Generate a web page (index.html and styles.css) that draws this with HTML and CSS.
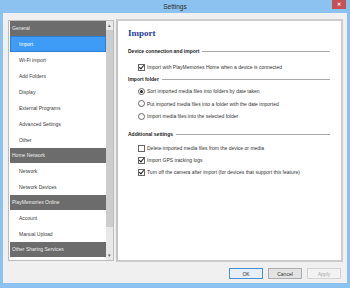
FILE: index.html
```html
<!DOCTYPE html>
<html>
<head>
  <title>Settings</title>
  <meta name="viewport" content="width=device-width, initial-scale=1.0">
  <link rel="stylesheet" href="styles.css">
</head>
<body>

  <div class="window">
    <div class="titlebar">
      <span></span>
      <span class="title">Settings</span>
      <span class="close">&#x2715;</span>
    </div>

    <div class="content">
      <div class="main">

        <!-- Left navigation -->
        <div class="sidebar">
          <ul class="nav">
            <li class="group">General</li>
            <li class="item selected">Import</li>
            <li class="item">Wi-Fi import</li>
            <li class="item">Add Folders</li>
            <li class="item">Display</li>
            <li class="item">External Programs</li>
            <li class="item">Advanced Settings</li>
            <li class="item">Other</li>
            <li class="group">Home Network</li>
            <li class="item">Network</li>
            <li class="item">Network Devices</li>
            <li class="group">PlayMemories Online</li>
            <li class="item">Account</li>
            <li class="item">Manual Upload</li>
            <li class="group">Other Sharing Services</li>
          </ul>
          <div class="scrollbar">
            <span class="arrow">&#x25B4;</span>
            <span class="thumb"></span>
            <span class="track"></span>
            <span class="arrow">&#x25BE;</span>
          </div>
        </div>

        <!-- Settings panel -->
        <div class="panel">
          <h1>Import</h1>

          <div class="section first">
            <span>Device connection and import</span>
            <span class="rule"></span>
          </div>
          <div class="option gap-s"><span class="check on"></span>Import with PlayMemories Home when a device is connected</div>

          <div class="section">
            <span>Import folder</span>
            <span class="rule"></span>
          </div>
          <div class="option"><span class="radio on"></span>Sort imported media files into folders by date taken</div>
          <div class="option tall"><span class="radio"></span>Put imported media files into a folder with the date imported</div>
          <div class="option"><span class="radio"></span>Import media files into the selected folder</div>

          <div class="section gap-l">
            <span>Additional settings</span>
            <span class="rule"></span>
          </div>
          <div class="option gap-xs"><span class="check"></span>Delete imported media files from the device or media</div>
          <div class="option"><span class="check on"></span>Import GPS tracking logs</div>
          <div class="option"><span class="check on"></span>Turn off the camera after import (for devices that support this feature)</div>
        </div>

      </div>

      <div class="buttons">
        <button class="default">OK</button>
        <button>Cancel</button>
        <button disabled>Apply</button>
      </div>
    </div>
  </div>

</body>
</html>
```

FILE: styles.css
```css
body {
  margin: 0;
  font-family: "Liberation Sans", Arial, sans-serif;
  font-size: 5px;
  color: #333;
}

.window {
  width: 350px;
  height: 288px;
  background-color: #8cc2f0;
  display: flex;
  flex-direction: column;
}

.titlebar {
  height: 13px;
  display: grid;
  grid-template-columns: 1fr auto 1fr;
  align-items: start;
}

.title {
  font-family: "Liberation Sans", Arial, sans-serif;
  font-size: 6.5px;
  line-height: 14px;
  color: #2b2b2b;
}

.close {
  justify-self: end;
  margin-right: 4px;
  width: 14px;
  height: 9px;
  background-color: #c75050;
  color: #fff;
  font-size: 5px;
  font-weight: bold;
  line-height: 9px;
  text-align: center;
}

.content {
  margin: 0 3px;
  height: 270px;
  background-color: #f0f0f0;
  padding: 6px 4px 0 5px;
  box-sizing: border-box;
}

.main {
  display: flex;
  gap: 2px;
  height: 243px;
}

/* sidebar */

.sidebar {
  margin-top: 1px;
  width: 106px;
  height: 241px;
  box-sizing: border-box;
  border: 1px solid #bcbcbc;
  background-color: #fff;
  display: flex;
  padding-left: 1px;
}

.nav {
  list-style: none;
  margin: 0;
  padding: 0;
  flex: 1;
  overflow: hidden;
}

.nav li {
  box-sizing: border-box;
}

.nav .group {
  height: 15px;
  line-height: 15px;
  padding-left: 2px;
  background-color: #6c6c6c;
  color: #ececec;
}

.nav .item {
  height: 16px;
  line-height: 16px;
  padding-left: 9px;
  color: #3a3a3a;
}

.nav .item.selected {
  background-color: #3f9cf6;
  border: 1px solid #2b7fd4;
  line-height: 14px;
  padding-left: 8px;
  color: #fff;
}

.scrollbar {
  width: 7px;
  background-color: #e8e8e8;
  display: flex;
  flex-direction: column;
  align-items: center;
}

.arrow {
  height: 9px;
  line-height: 9px;
  font-size: 5px;
  color: #606060;
}

.thumb {
  width: 7px;
  height: 197px;
  background-color: #cdcdcd;
}

.track {
  flex: 1;
}

/* panel */

.panel {
  flex: 1;
  background-color: #fff;
  border: 2px solid #cccccc;
  border-left-color: #c2c2c2;
  padding: 6px 11px 0 10px;
}

.panel h1 {
  margin: 0;
  font-family: "Liberation Serif", "Times New Roman", serif;
  font-size: 9px;
  line-height: 12px;
  color: #1f3d9c;
}

.section {
  display: flex;
  align-items: center;
  height: 12px;
  font-weight: bold;
  color: #222;
}

.section.first {
  margin-top: 6px;
}

.section.gap-l {
  margin-top: 6px;
}

.rule {
  flex: 1;
  height: 1px;
  margin-left: 3px;
  background-color: #a8a8a8;
}

.option {
  display: flex;
  align-items: center;
  height: 12px;
  padding-left: 10px;
  color: #333;
}

.option.gap-s {
  margin-top: 4px;
}

.option.gap-xs {
  margin-top: 2px;
}

.option.tall {
  height: 13px;
}

.check,
.radio {
  width: 5px;
  height: 5px;
  margin-right: 2px;
  border: 1px solid #666;
  background-color: #fff;
  position: relative;
}

.check.on::after {
  content: "";
  position: absolute;
  left: 1px;
  top: -1px;
  width: 2px;
  height: 4px;
  border: solid #222;
  border-width: 0 1px 1px 0;
  transform: rotate(40deg);
}

.radio {
  border-radius: 50%;
}

.radio.on::after {
  content: "";
  position: absolute;
  left: 1px;
  top: 1px;
  width: 3px;
  height: 3px;
  border-radius: 50%;
  background-color: #222;
}

/* buttons */

.buttons {
  display: flex;
  justify-content: flex-end;
  gap: 5px;
  margin-top: 6px;
  padding-right: 2px;
}

button {
  width: 34px;
  height: 11px;
  padding: 0;
  font-family: "Liberation Sans", Arial, sans-serif;
  font-size: 5px;
  color: #333;
  background-color: #e3e3e3;
  border: 1px solid #acacac;
  border-radius: 0;
}

button.default {
  border-color: #4a8fd0;
  background-color: #e6eef6;
}

button:disabled {
  color: #a8a8a8;
  background-color: #f2f2f2;
  border-color: #d2d2d2;
}
```
